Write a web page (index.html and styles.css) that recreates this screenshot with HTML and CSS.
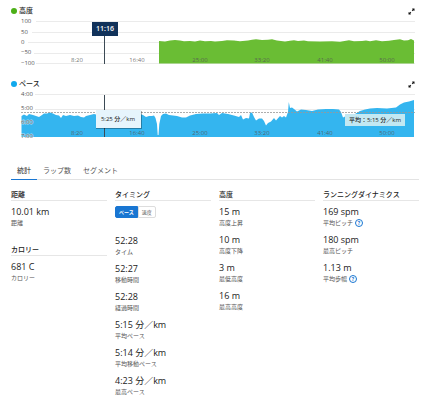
FILE: index.html
```html
<!DOCTYPE html>
<html lang="ja">
<head>
  <meta charset="UTF-8">
  <meta name="viewport" content="width=device-width, initial-scale=1.0">
  <title>アクティビティ</title>
  <link rel="stylesheet" href="styles.css">
</head>
<body>
  <section class="chart">
    <header class="chart-header">
      <h2 class="chart-title"><span class="dot dot-green"></span>高度</h2>
      <button class="expand" type="button" aria-label="拡大">
        <svg viewBox="0 0 14 14"><path d="M8 1h5v5l-1.500-1.500-2 2-2-2 2-2zM6 13H1V8l1.500 1.500 2-2 2 2-2 2z"/></svg>
      </button>
    </header>
    <svg class="plot" viewBox="11 17 404 50">
      <path class="grid" d="M36 21.500H415M32 32.500H415M28 42.500H415M34 53.500H415M36 63.500H415"/>
      <path class="area-green" d="M159 63.500V41L165 41.500 170 40.500 175 40 180 40.500 184 41.300 190 41 195 41.500 200 40.500 205 41.200 211 41 215 41.500 222 41 227 40.300 234 40.500 240 41.300 248 40.500 252 39.700 256 39.300 262 40 268 39.700 272 39.300 277 40.500 285 41.500 290 40.700 294 40.300 298 41 304 40.500 308 41.300 320 41.500 332 41.200 340 41.700 346 40.700 349 40.200 354 41.300 362 41 366 40.500 370 41.300 376 40.300 382 41.300 389 40.700 394 40 400 39.200 404 40.500 408 40.300 411 39 414 40.500V63.500z"/>
      <path class="cursor" d="M104.500 23V64"/>
      <g class="axis">
        <text x="21" y="23">100</text>
        <text x="21" y="34">50</text>
        <text x="21" y="44">0</text>
        <text x="21" y="54">−50</text>
        <text x="21" y="65">−100</text>
      </g>
      <g class="axis axis-x">
        <text x="77" y="62">8:20</text>
        <text x="137" y="62">16:40</text>
        <text x="200" y="62">25:00</text>
        <text x="262" y="62">33:20</text>
        <text x="325" y="62">41:40</text>
        <text x="387" y="62">50:00</text>
      </g>
      <rect class="time-box" x="92" y="22" width="26" height="14"/>
      <text class="time-text" x="105" y="31">11:16</text>
    </svg>
  </section>

  <section class="chart">
    <header class="chart-header">
      <h2 class="chart-title"><span class="dot dot-blue"></span>ペース</h2>
      <button class="expand" type="button" aria-label="拡大">
        <svg viewBox="0 0 14 14"><path d="M8 1h5v5l-1.500-1.500-2 2-2-2 2-2zM6 13H1V8l1.500 1.500 2-2 2 2-2 2z"/></svg>
      </button>
    </header>
    <svg class="plot" viewBox="11 90 404 50">
      <path class="grid" d="M35 94.500H415M35 109.500H415"/>
      <path class="area-blue" d="M21.500 137V116L24 114.500 27 116 29 114 33 115 36 116 39 117 42 115 44 113.500 47 113.500 50 112.500 53 113.500 56 115 59 115.500 61 118 63 115 66 116 70 115 74 116 78 115.500 81 117 84 117.500 86 116 90 115 94 114 98 115 110 115.500 120 115 132 116 140 114 143 115 146 117 149 116 152 116 154 115.500 155.500 118 157 124 157.700 135H158.500L159.300 124 161 116 163 114 166 113.500 169 115 173 115.500 177 116 182 117.500 186 117.500 190 115.500 196 114 203 113.500 210 113.500 217 113 219 115 222 113 228 114 234 115.500 239 117 241 115 243 119.500 246 118 249 118.500 250 113 252 112.500 254 117 256 120.500 259 118.500 262 118.500 264 121 266 125.500 268 123 271 121.500 274 118 276 120.500 280 116 282 117.500 284 116 286 117.500 288 112 288.800 102 290 108 292 107.500 294 109 297 111.500 301 109.500 306 110 312 111 318 109.500 326 109 333 109 339 109.500 341 112 343 117.500 346 116 349 118 352 115.500 355 114 360 111 365 109.500 370 108.500 377 108 387 108.500 396 107.500 400 104.500 404 102.500 409 101.500 414 100V137z"/>
      <path class="average-line" d="M21 112.500H415"/>
      <path class="cursor" d="M104.500 95V137"/>
      <g class="axis">
        <text x="21" y="96">4:00</text>
        <text x="21" y="110">5:00</text>
        <text class="halo" x="21" y="124">6:00</text>
        <text class="halo" x="21" y="138">7:00</text>
      </g>
      <g class="axis axis-x">
        <text x="77" y="135">8:20</text>
        <text x="137" y="135">16:40</text>
        <text x="200" y="135">25:00</text>
        <text x="262" y="135">33:20</text>
        <text x="325" y="135">41:40</text>
        <text x="387" y="135">50:00</text>
      </g>
      <rect class="tip-shadow" x="96" y="111" width="46" height="18"/>
      <rect class="tip-box" x="96" y="110" width="45" height="18"/>
      <text class="tip-text" x="118" y="121">5:25 分／km</text>
      <rect class="average-box" x="345" y="114" width="60" height="12"/>
      <text class="tip-text" x="375" y="122">平均：5:15 分／km</text>
    </svg>
  </section>

  <main>
    <nav class="tabs">
      <a class="tab active" href="#stats">統計</a>
      <a class="tab" href="#laps">ラップ数</a>
      <a class="tab" href="#segments">セグメント</a>
    </nav>

    <div class="stats" id="stats">
      <div>
        <section class="group">
          <h3>距離</h3>
          <div class="item"><div class="value">10.01 km</div><div class="label">距離</div></div>
        </section>
        <section class="group">
          <h3>カロリー</h3>
          <div class="item"><div class="value">681 C</div><div class="label">カロリー</div></div>
        </section>
      </div>

      <section class="group">
        <h3>タイミング</h3>
        <div class="toggle">
          <button class="on" type="button">ペース</button><button type="button">速度</button>
        </div>
        <div class="item"><div class="value">52:28</div><div class="label">タイム</div></div>
        <div class="item"><div class="value">52:27</div><div class="label">移動時間</div></div>
        <div class="item"><div class="value">52:28</div><div class="label">経過時間</div></div>
        <div class="item"><div class="value">5:15 分／km</div><div class="label">平均ペース</div></div>
        <div class="item"><div class="value">5:14 分／km</div><div class="label">平均移動ペース</div></div>
        <div class="item"><div class="value">4:23 分／km</div><div class="label">最高ペース</div></div>
      </section>

      <section class="group">
        <h3>高度</h3>
        <div class="item"><div class="value">15 m</div><div class="label">高度上昇</div></div>
        <div class="item"><div class="value">10 m</div><div class="label">高度下降</div></div>
        <div class="item"><div class="value">3 m</div><div class="label">最低高度</div></div>
        <div class="item"><div class="value">16 m</div><div class="label">最高高度</div></div>
      </section>

      <section class="group">
        <h3>ランニングダイナミクス</h3>
        <div class="item"><div class="value">169 spm</div><div class="label">平均ピッチ<button class="help" type="button">?</button></div></div>
        <div class="item"><div class="value">180 spm</div><div class="label">最高ピッチ</div></div>
        <div class="item"><div class="value">1.13 m</div><div class="label">平均歩幅<button class="help" type="button">?</button></div></div>
      </section>
    </div>
  </main>
</body>
</html>
```

FILE: styles.css
```css
* {
  padding: 0;
  margin: 0;
  box-sizing: border-box;
}
body {
  background-color: #fff;
  color: #222;
  font-family: "Open Sans", "Noto Sans CJK JP", sans-serif;
  font-size: 7px;
  line-height: 10px;
  padding-top: 5px;
}
button {
  font-family: inherit;
  background: none;
  border: none;
  cursor: pointer;
}

/* charts */
.chart {
  padding: 0 15px 0 11px;
  margin-bottom: 11px;
}
.chart-header {
  display: flex;
  align-items: center;
  justify-content: space-between;
  height: 12px;
}
.chart-title {
  display: flex;
  align-items: center;
  gap: 2px;
  font-size: 7px;
  font-weight: 500;
}
.dot {
  width: 6px;
  height: 6px;
  border-radius: 50%;
}
.dot-green {
  background-color: #4caf17;
}
.dot-blue {
  background-color: #11a9ed;
}
.expand {
  width: 7px;
  height: 7px;
}
.expand svg {
  display: block;
  fill: #111;
}
.plot {
  display: block;
  width: 100%;
}
.grid {
  stroke: #ebebeb;
}
.area-green {
  fill: #6abd34;
}
.area-blue {
  fill: #34b5ef;
}
.cursor {
  stroke: #3c4a55;
}
.average-line {
  fill: none;
  stroke: #999;
  stroke-opacity: 0.8;
  stroke-dasharray: 2 1;
}
.axis {
  fill: #555;
  font-size: 6px;
}
.axis-x {
  text-anchor: middle;
  fill-opacity: 0.85;
}
.halo {
  stroke: #fff;
  stroke-opacity: 0.6;
  stroke-width: 1px;
  paint-order: stroke;
}
.time-box {
  fill: #11325a;
}
.time-text {
  fill: #fff;
  font-size: 7px;
  font-weight: 600;
  text-anchor: middle;
}
.tip-shadow {
  fill: #000;
  fill-opacity: 0.3;
}
.tip-box {
  fill: #e6f5fc;
}
.average-box {
  fill: #c3e8f2;
}
.tip-text {
  fill: #222;
  font-size: 6px;
  font-weight: 500;
  text-anchor: middle;
}

/* stats */
main {
  padding: 0 11px;
}
.tabs {
  display: flex;
  margin-top: 26px;
  border-bottom: 1px solid #e3e3e3;
}
.tab {
  padding: 0 6px 3px;
  margin-bottom: -1px;
  border-bottom: 1px solid transparent;
  color: #555;
  text-decoration: none;
}
.tab.active {
  color: #222;
  border-color: #1976d2;
}
.stats {
  display: grid;
  grid-template-columns: repeat(4, 1fr);
  gap: 8px;
  padding-top: 10px;
}
.group {
  margin-bottom: 12px;
}
h3 {
  font-size: 7px;
  font-weight: 500;
  border-bottom: 1px solid #e6e6e6;
  margin-bottom: 4px;
}
.item {
  height: 28px;
}
.value {
  font-size: 9px;
  line-height: 14px;
}
.label {
  display: flex;
  align-items: center;
  gap: 2px;
  color: #555;
  font-size: 6px;
  line-height: 8px;
}
.toggle {
  display: flex;
  height: 29px;
  align-items: flex-start;
  padding-top: 1px;
}
.toggle button {
  height: 12px;
  padding: 0 3px;
  border: 1px solid #ddd;
  border-radius: 0 2px 2px 0;
  color: #555;
  font-size: 5px;
  line-height: 10px;
}
.toggle .on {
  background-color: #1976d2;
  border-color: #1976d2;
  border-radius: 2px 0 0 2px;
  padding: 0 3px;
  color: #fff;
  font-weight: 700;
}
.help {
  width: 8px;
  height: 8px;
  border: 1px solid #1976d2;
  border-radius: 50%;
  color: #1976d2;
  font-size: 5px;
  font-weight: 700;
  line-height: 6px;
}
```
